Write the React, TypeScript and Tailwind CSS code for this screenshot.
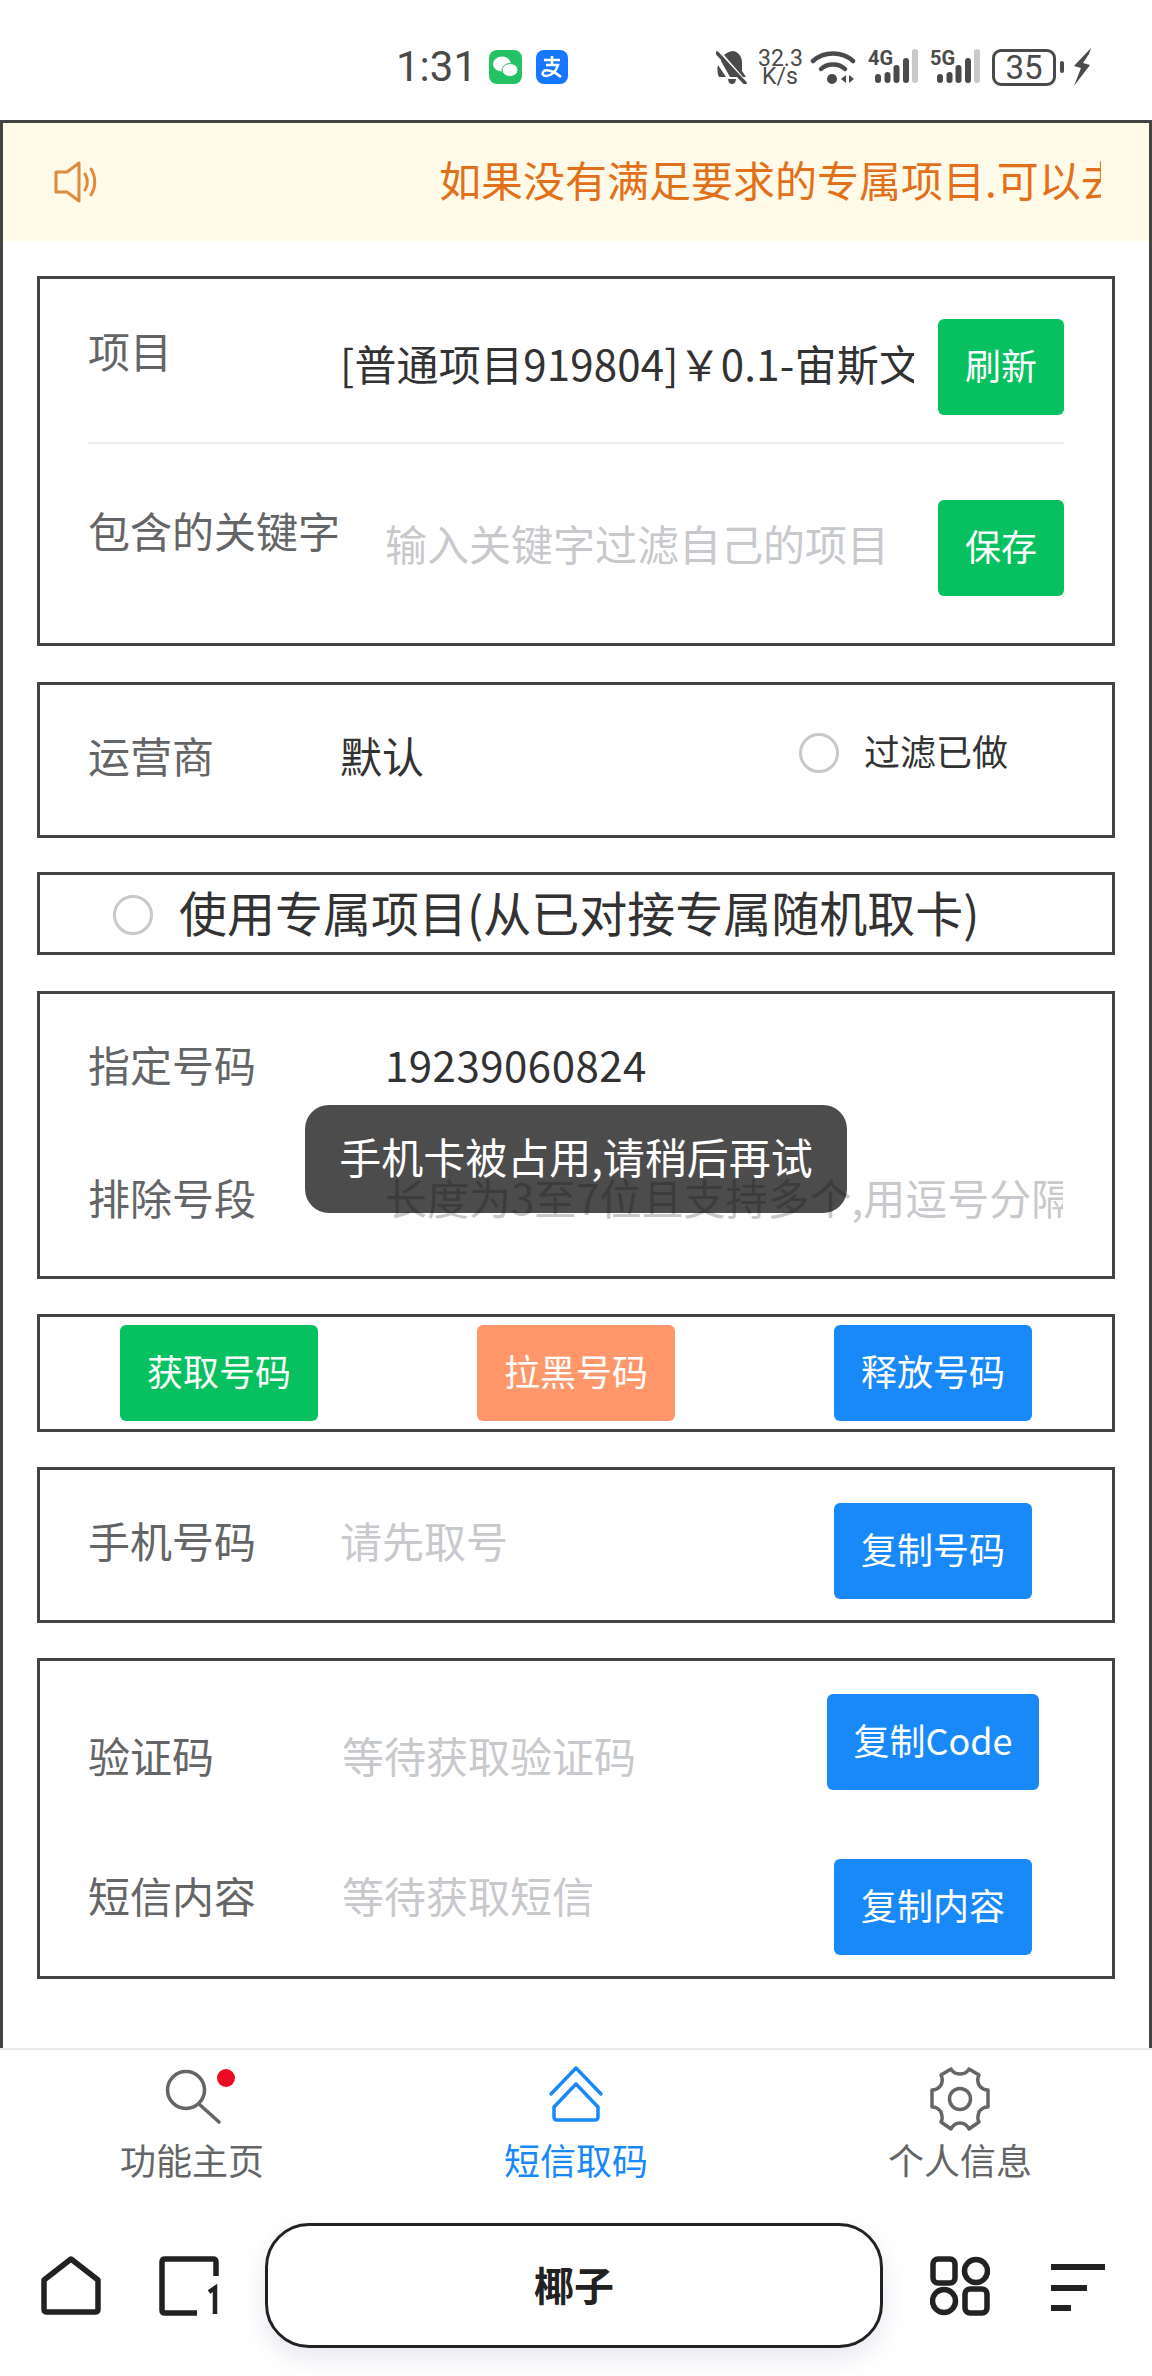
import type { ReactNode } from "react";

const Btn = ({ className, children }: { className: string; children: ReactNode }) => (
  <div
    className={`h-24 pb-[6px] flex items-center justify-center shrink-0 rounded-md text-white text-[36px] leading-[48px] ${className}`}
  >
    {children}
  </div>
);

const Label = ({ className, children }: { className: string; children: ReactNode }) => (
  <div className={`shrink-0 text-[#646566] text-[42px] leading-[44px] whitespace-nowrap ${className}`}>{children}</div>
);

const Hint = ({ className, children }: { className: string; children: ReactNode }) => (
  <div className={`text-[#c8c9cc] text-[42px] leading-[44px] whitespace-nowrap overflow-x-clip ${className}`}>
    {children}
  </div>
);

const Radio = ({ className }: { className: string }) => (
  <div className={`w-10 h-10 shrink-0 rounded-full border-[3px] border-[#c8c9cc] ${className}`} />
);

const Signal = ({ name }: { name: string }) => (
  <div className="relative w-[50px] h-[36px] flex justify-end">
    <span className="absolute left-0 top-[-1px] text-[20px] leading-[20px] font-bold font-['Roboto',sans-serif]">
      {name}
    </span>
    <svg width="43" height="34" viewBox="0 0 43 34">
      <rect x="0" y="25" width="6" height="9" rx="3" fill="#4a4a4a" />
      <rect x="9.500" y="23" width="6" height="11" rx="3" fill="#4a4a4a" />
      <rect x="18.500" y="16" width="6" height="18" rx="3" fill="#4a4a4a" />
      <rect x="28" y="9" width="6" height="25" rx="3" fill="#4a4a4a" />
      <rect x="37" y="0" width="6" height="34" rx="3" fill="#c9c9c9" />
    </svg>
  </div>
);

const StatusBar = () => (
  <div className="h-[120px] pt-[14px] flex items-center pl-[396px] text-[#4a4a4a]">
    <div className="w-[78px] text-[42px] leading-[48px] font-['Roboto',sans-serif]">1:31</div>
    <svg width="33" height="34" viewBox="0 0 33 34" className="ml-[15px]">
      <rect width="33" height="34" rx="8" fill="#25c265" />
      <ellipse cx="13" cy="14" rx="9" ry="7.500" fill="#fff" />
      <ellipse cx="21" cy="20" rx="8" ry="6.500" fill="#fff" stroke="#25c265" />
    </svg>
    <svg width="32" height="34" viewBox="0 0 32 34" className="ml-[14px]">
      <rect width="32" height="34" rx="8" fill="#1677ff" />
      <path d="M8 10h16M16 6v8M10 15h12c-2 7-7 11-12 11-3 0-4-2-3-4 2-3 10-2 18 5" fill="none" stroke="#fff" strokeWidth="2.500" />
    </svg>
    <svg width="32" height="34" viewBox="0 0 32 34" className="ml-[148px]">
      <path d="M17 1c6 1 9 6 9 12v8l4 6H14L5 11c1-5 5-9 12-10zM3 27h7L2 15c-1 4-1 8 1 12zM12 29h8c0 3-2 5-4 5s-4-2-4-5z" fill="#4a4a4a" />
      <path d="M4 2l26 30" stroke="#fff" strokeWidth="2" />
      <path d="M1 3l28 30" stroke="#4a4a4a" strokeWidth="3.500" strokeLinecap="round" />
    </svg>
    <div className="w-[44px] ml-[10px] text-center text-[23px] leading-[18px] font-['Roboto',sans-serif] mt-[2px]">
      <div>32.3</div>
      <div>K/s</div>
    </div>
    <svg width="46" height="36" viewBox="0 0 46 36" className="ml-[8px]">
      <path d="M3 12c11-10 29-10 40 0" fill="none" stroke="#4a4a4a" strokeWidth="4.500" strokeLinecap="round" />
      <path d="M11 20c6-6 18-6 24 0" fill="none" stroke="#4a4a4a" strokeWidth="4.500" strokeLinecap="round" />
      <circle cx="22" cy="30" r="5" fill="#4a4a4a" />
      <path d="M36 26v8l-5-4zM39 26v8l5-4z" fill="#4a4a4a" />
    </svg>
    <div className="ml-[12px]">
      <Signal name="4G" />
    </div>
    <div className="ml-[12px]">
      <Signal name="5G" />
    </div>
    <div className="ml-[12px] w-[64px] h-[37px] rounded-[9px] border-[3px] border-[#4a4a4a] flex items-center justify-center text-[33px] leading-[37px] font-['Roboto',sans-serif]">
      35
    </div>
    <div className="ml-[4px] w-[4px] h-[12px] rounded-sm bg-[#4a4a4a]" />
    <svg width="18" height="38" viewBox="0 0 18 38" className="ml-[9px]">
      <path d="M18 0L1 18l7 2-7 18 16-21-7-2 6-9 2-6z" fill="#4a4a4a" />
    </svg>
  </div>
);

const Notice = () => (
  <div className="h-[118px] bg-[#fffbe8] flex items-center text-[#e2701a]">
    <svg width="50" height="44" viewBox="0 0 50 44" className="ml-[49px] shrink-0">
      <path d="M4 12h11L27 3v38L15 32H4z" fill="none" stroke="#e08a3c" strokeWidth="3" strokeLinejoin="round" />
      <path d="M33 14c3 5 3 11 0 16M39 9c5 8 5 18 0 26" fill="none" stroke="#e08a3c" strokeWidth="3" strokeLinecap="round" />
    </svg>
    <div className="ml-[337px] w-[662px] pb-[6px] overflow-hidden whitespace-nowrap text-[42px] leading-[48px]">
      如果没有满足要求的专属项目.可以去对接
    </div>
  </div>
);

const TabBar = () => (
  <div className="h-[175px] grid grid-cols-3 border-t-2 border-[#ebedf0] bg-white">
    <div className="flex flex-col items-center text-[#646566]">
      <div className="relative w-[80px] h-[68px] mt-[15px]">
        <svg width="80" height="68" viewBox="0 0 80 68">
          <circle cx="34" cy="25" r="18.500" fill="none" stroke="#646566" strokeWidth="3.500" />
          <path d="M47 39l20 18" stroke="#646566" strokeWidth="3.500" strokeLinecap="round" />
        </svg>
        <div className="absolute left-[65px] top-[4px] w-[18px] h-[18px] rounded-full bg-[#ee0a24]" />
      </div>
      <div className="text-[36px] leading-[48px] mt-[2px]">功能主页</div>
    </div>
    <div className="flex flex-col items-center text-[#1989fa]">
      <svg width="56" height="68" viewBox="0 0 56 68" className="mt-[15px]">
        <path d="M3 29L28 3l25 26" fill="none" stroke="#1989fa" strokeWidth="3.500" strokeLinecap="round" strokeLinejoin="round" />
        <path d="M28 19L6 42v10c0 2 1 3 3 3h38c2 0 3-1 3-3V42z" fill="none" stroke="#1989fa" strokeWidth="3.500" strokeLinejoin="round" />
      </svg>
      <div className="text-[36px] leading-[48px] mt-[2px]">短信取码</div>
    </div>
    <div className="flex flex-col items-center text-[#646566]">
      <svg width="62" height="68" viewBox="0 0 62 68" className="mt-[15px]">
        <path
          d="M22 4c2 4 6 5 9 5s7-1 9-5l10 6c-2 4-1 8 0 10 2 3 5 5 9 5v17c-4 0-7 2-9 5-1 3-2 7 0 10l-10 7c-2-4-6-6-9-6s-7 2-9 6l-10-7c2-3 1-7 0-10-2-3-5-5-9-5V25c4 0 7-2 9-5 1-2 2-6 0-10z"
          fill="none"
          stroke="#646566"
          strokeWidth="3.500"
          strokeLinejoin="round"
        />
        <circle cx="31" cy="34" r="10.500" fill="none" stroke="#646566" strokeWidth="3.500" />
      </svg>
      <div className="text-[36px] leading-[48px] mt-[2px]">个人信息</div>
    </div>
  </div>
);

const BrowserBar = () => (
  <div className="h-[153px] bg-white flex items-start">
    <svg width="60" height="60" viewBox="0 0 60 60" className="ml-[41px] mt-[33px] shrink-0">
      <path d="M30 3L3 24v29c0 2 1 3 3 3h48c2 0 3-1 3-3V24z" fill="none" stroke="#222" strokeWidth="5.500" strokeLinejoin="round" />
    </svg>
    <svg width="60" height="60" viewBox="0 0 60 60" className="ml-[58px] mt-[33px] shrink-0">
      <path d="M57 20V6c0-2-1-3-3-3H6C4 3 3 4 3 6v48c0 2 1 3 3 3h32" fill="none" stroke="#222" strokeWidth="5.500" />
      <path d="M50 36l6-4v26" fill="none" stroke="#222" strokeWidth="4.500" />
    </svg>
    <div className="ml-[46px] w-[618px] h-[125px] pb-[4px] shrink-0 rounded-[44px] border-[3px] border-[#222] bg-white shadow-[0_10px_24px_rgba(120,130,170,0.18)] flex items-center justify-center text-[#222] text-[40px] leading-[48px] font-bold">
      椰子
    </div>
    <svg width="60" height="60" viewBox="0 0 60 60" className="ml-[47px] mt-[33px] shrink-0">
      <rect x="3" y="3" width="22" height="24" rx="5" fill="none" stroke="#222" strokeWidth="5.500" />
      <circle cx="46" cy="15" r="11.500" fill="none" stroke="#222" strokeWidth="5.500" />
      <circle cx="14" cy="45" r="11.500" fill="none" stroke="#222" strokeWidth="5.500" />
      <rect x="35" y="33" width="22" height="24" rx="5" fill="none" stroke="#222" strokeWidth="5.500" />
    </svg>
    <div className="ml-[61px] mt-[41px] flex flex-col w-[54px]">
      <div className="h-[6px] w-[54px] bg-[#222]" />
      <div className="h-[6px] w-[36px] bg-[#222] mt-[15px]" />
      <div className="h-[6px] w-[20px] bg-[#222] mt-[14px]" />
    </div>
  </div>
);

export default function App() {
  return (
    <div className="w-[1152px] h-[2376px] overflow-hidden bg-white font-['Noto_Sans_CJK_SC','Noto_Sans',sans-serif]">
      <StatusBar />
      <div className="relative h-[1928px] border-x-[3px] border-t-[3px] border-[#444]">
        <Notice />

        <div className="mx-[34px] mt-[35px] h-[370px] border-[3px] border-[#444] pt-10 pl-[48px] pr-[48px]">
          <div className="flex items-start">
            <Label className="w-[252px] mt-[9px]">项目</Label>
            <div className="w-[574px] mt-[22px] overflow-x-clip whitespace-nowrap text-[#323233] text-[42px] leading-[44px] tracking-[0.2px]">
              [普通项目919804]￥0.1-宙斯文
            </div>
            <Btn className="w-[126px] ml-[24px] bg-[#07c160]">刷新</Btn>
          </div>
          <div className="h-[2px] mt-[27px] bg-[#ebedf0]" />
          <div className="flex items-start mt-[56px]">
            <Label className="w-[297px] mt-[8px]">包含的关键字</Label>
            <Hint className="w-[532px] mt-[21px]">输入关键字过滤自己的项目</Hint>
            <Btn className="w-[126px] ml-[21px] bg-[#07c160]">保存</Btn>
          </div>
        </div>

        <div className="mx-[34px] mt-[36px] h-[156px] border-[3px] border-[#444] pl-[48px] flex items-start">
          <Label className="w-[252px] mt-[48px]">运营商</Label>
          <div className="w-[459px] mt-[48px] text-[#323233] text-[42px] leading-[44px]">默认</div>
          <Radio className="mt-[48px]" />
          <div className="ml-[25px] mt-[41px] text-[#323233] text-[36px] leading-[48px]">过滤已做</div>
        </div>

        <div className="mx-[34px] mt-[34px] h-[83px] border-[3px] border-[#444] pl-[73px] flex items-center">
          <Radio className="mt-[2px]" />
          <div className="ml-[26px] text-[#323233] text-[48px] leading-[56px] whitespace-nowrap mt-[-6px]">
            使用专属项目(从已对接专属随机取卡)
          </div>
        </div>

        <div className="relative mx-[34px] mt-[36px] h-[288px] border-[3px] border-[#444] pt-[48px] pl-[48px] pr-[49px]">
          <div className="flex items-start">
            <Label className="w-[297px]">指定号码</Label>
            <div className="text-[#323233] text-[42px] leading-[44px] tracking-[0.5px]">19239060824</div>
          </div>
          <div className="flex items-start mt-[89px]">
            <Label className="w-[297px]">排除号段</Label>
            <Hint className="flex-1 min-w-0">长度为3至7位且支持多个,用逗号分隔</Hint>
          </div>
          <div className="absolute left-[265px] top-[111px] w-[542px] h-[108px] pb-[6px] rounded-[24px] bg-[rgba(0,0,0,0.7)] flex items-center justify-center text-white text-[42px] leading-[48px] whitespace-nowrap">
            手机卡被占用,请稍后再试
          </div>
        </div>

        <div className="mx-[34px] mt-[35px] h-[118px] border-[3px] border-[#444] pt-2 pl-[80px] flex items-start gap-[159px]">
          <Btn className="w-[198px] bg-[#07c160]">获取号码</Btn>
          <Btn className="w-[198px] bg-[#ff976a]">拉黑号码</Btn>
          <Btn className="w-[198px] bg-[#1989fa]">释放号码</Btn>
        </div>

        <div className="mx-[34px] mt-[35px] h-[156px] border-[3px] border-[#444] pl-[48px] flex items-start">
          <Label className="w-[252px] mt-[48px]">手机号码</Label>
          <Hint className="w-[494px] mt-[48px]">请先取号</Hint>
          <Btn className="w-[198px] mt-[33px] bg-[#1989fa]">复制号码</Btn>
        </div>

        <div className="mx-[34px] mt-[35px] h-[321px] border-[3px] border-[#444] pl-[48px]">
          <div className="flex items-start pt-[33px]">
            <Label className="w-[254px] mt-[39px]">验证码</Label>
            <Hint className="w-[485px] mt-[39px]">等待获取验证码</Hint>
            <Btn className="w-[212px] bg-[#1989fa]">复制Code</Btn>
          </div>
          <div className="flex items-start mt-[69px]">
            <Label className="w-[254px] mt-[14px]">短信内容</Label>
            <Hint className="w-[492px] mt-[14px]">等待获取短信</Hint>
            <Btn className="w-[198px] bg-[#1989fa]">复制内容</Btn>
          </div>
        </div>
      </div>
      <TabBar />
      <BrowserBar />
    </div>
  );
}
